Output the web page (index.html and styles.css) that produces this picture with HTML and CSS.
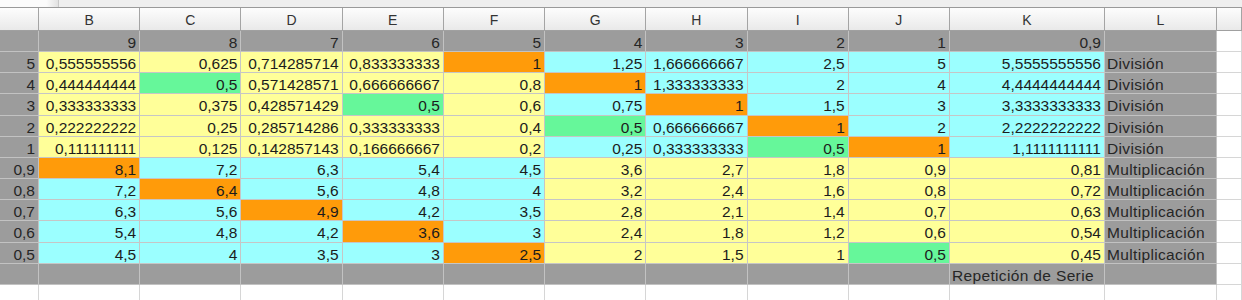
FILE: index.html
```
<!DOCTYPE html>
<html lang="es">
<head>
<meta charset="utf-8">
<title>Tabla</title>
<link rel="stylesheet" href="styles.css">
</head>
<body>
<div class="sheet">
  <div class="strip"><div class="tab"></div></div>

  <div class="hd"></div><div class="hd">B</div><div class="hd">C</div><div class="hd">D</div><div class="hd">E</div><div class="hd">F</div><div class="hd">G</div><div class="hd">H</div><div class="hd">I</div><div class="hd">J</div><div class="hd">K</div><div class="hd">L</div><div class="hd"></div>

  <div class="c k"></div><div class="c k">9</div><div class="c k">8</div><div class="c k">7</div><div class="c k">6</div><div class="c k">5</div><div class="c k">4</div><div class="c k">3</div><div class="c k">2</div><div class="c k">1</div><div class="c k">0,9</div><div class="c k"></div><div class="c w"></div>

  <div class="c k">5</div><div class="c y">0,555555556</div><div class="c y">0,625</div><div class="c y">0,714285714</div><div class="c y">0,833333333</div><div class="c o">1</div><div class="c b">1,25</div><div class="c b">1,666666667</div><div class="c b">2,5</div><div class="c b">5</div><div class="c b">5,5555555556</div><div class="c k t">División</div><div class="c w"></div>

  <div class="c k">4</div><div class="c y">0,444444444</div><div class="c g">0,5</div><div class="c y">0,571428571</div><div class="c y">0,666666667</div><div class="c y">0,8</div><div class="c o">1</div><div class="c b">1,333333333</div><div class="c b">2</div><div class="c b">4</div><div class="c b">4,4444444444</div><div class="c k t">División</div><div class="c w"></div>

  <div class="c k">3</div><div class="c y">0,333333333</div><div class="c y">0,375</div><div class="c y">0,428571429</div><div class="c g">0,5</div><div class="c y">0,6</div><div class="c b">0,75</div><div class="c o">1</div><div class="c b">1,5</div><div class="c b">3</div><div class="c b">3,3333333333</div><div class="c k t">División</div><div class="c w"></div>

  <div class="c k">2</div><div class="c y">0,222222222</div><div class="c y">0,25</div><div class="c y">0,285714286</div><div class="c y">0,333333333</div><div class="c y">0,4</div><div class="c g">0,5</div><div class="c b">0,666666667</div><div class="c o">1</div><div class="c b">2</div><div class="c b">2,2222222222</div><div class="c k t">División</div><div class="c w"></div>

  <div class="c k">1</div><div class="c y">0,111111111</div><div class="c y">0,125</div><div class="c y">0,142857143</div><div class="c y">0,166666667</div><div class="c y">0,2</div><div class="c b">0,25</div><div class="c b">0,333333333</div><div class="c g">0,5</div><div class="c o">1</div><div class="c b">1,1111111111</div><div class="c k t">División</div><div class="c w"></div>

  <div class="c k">0,9</div><div class="c o">8,1</div><div class="c b">7,2</div><div class="c b">6,3</div><div class="c b">5,4</div><div class="c b">4,5</div><div class="c y">3,6</div><div class="c y">2,7</div><div class="c y">1,8</div><div class="c y">0,9</div><div class="c y">0,81</div><div class="c k t">Multiplicación</div><div class="c w"></div>

  <div class="c k">0,8</div><div class="c b">7,2</div><div class="c o">6,4</div><div class="c b">5,6</div><div class="c b">4,8</div><div class="c b">4</div><div class="c y">3,2</div><div class="c y">2,4</div><div class="c y">1,6</div><div class="c y">0,8</div><div class="c y">0,72</div><div class="c k t">Multiplicación</div><div class="c w"></div>

  <div class="c k">0,7</div><div class="c b">6,3</div><div class="c b">5,6</div><div class="c o">4,9</div><div class="c b">4,2</div><div class="c b">3,5</div><div class="c y">2,8</div><div class="c y">2,1</div><div class="c y">1,4</div><div class="c y">0,7</div><div class="c y">0,63</div><div class="c k t">Multiplicación</div><div class="c w"></div>

  <div class="c k">0,6</div><div class="c b">5,4</div><div class="c b">4,8</div><div class="c b">4,2</div><div class="c o">3,6</div><div class="c b">3</div><div class="c y">2,4</div><div class="c y">1,8</div><div class="c y">1,2</div><div class="c y">0,6</div><div class="c y">0,54</div><div class="c k t">Multiplicación</div><div class="c w"></div>

  <div class="c k">0,5</div><div class="c b">4,5</div><div class="c b">4</div><div class="c b">3,5</div><div class="c b">3</div><div class="c o">2,5</div><div class="c y">2</div><div class="c y">1,5</div><div class="c y">1</div><div class="c g">0,5</div><div class="c y">0,45</div><div class="c k t">Multiplicación</div><div class="c w"></div>

  <div class="c k"></div><div class="c k"></div><div class="c k"></div><div class="c k"></div><div class="c k"></div><div class="c k"></div><div class="c k"></div><div class="c k"></div><div class="c k"></div><div class="c k"></div><div class="c k t">Repetición de Serie</div><div class="c k"></div><div class="c w"></div>

  <div class="c w"></div><div class="c w"></div><div class="c w"></div><div class="c w"></div><div class="c w"></div><div class="c w"></div><div class="c w"></div><div class="c w"></div><div class="c w"></div><div class="c w"></div><div class="c w"></div><div class="c w"></div><div class="c w"></div>
</div>
</body>
</html>
```
FILE: styles.css
```
html, body {
  margin: 0;
  padding: 0;
  background: #ffffff;
}
body {
  width: 1242px;
  height: 300px;
  overflow: hidden;
  font-family: "Liberation Sans", Arial, sans-serif;
}
.sheet {
  display: grid;
  grid-template-columns: 39px repeat(9, 101.22px) 155px 111.7px 1fr;
  grid-template-rows: 8px 23px repeat(12, 21.17px) 30px;
}
.strip {
  grid-column: 1 / -1;
  background: #efefef;
  border-bottom: 1px solid #9a9a9a;
  box-sizing: border-box;
  display: flex;
}
.tab {
  width: 58px;
  background: linear-gradient(to right, #fbfbfb 80%, #e2e2e2);
  border-right: 1px solid #c9c9c9;
}
.hd {
  box-sizing: border-box;
  background: linear-gradient(to bottom, #fdfdfd, #e9e9e9);
  border-right: 1px solid #a4a4a4;
  border-bottom: 1px solid #a0a0a0;
  font-size: 14px;
  line-height: 22px;
  padding-top: 1px;
  text-align: center;
  color: #333333;
}
.c {
  box-sizing: border-box;
  border-right: 1px solid #c6c6c6;
  border-bottom: 1px solid #c6c6c6;
  font-size: 15.5px;
  line-height: 18px;
  padding: 3px 3px 0 2px;
  text-align: right;
  white-space: nowrap;
  color: #1c1c1c;
}
.t {
  text-align: left;
  letter-spacing: 0.35px;
}
.k { background: #9c9c9c; border-color: #c2c2c2; color: #262626; }
.y { background: #ffff99; }
.b { background: #9bffff; }
.g { background: #66f79a; }
.o { background: #ff9b0a; }
.w { background: #ffffff; border-color: #d6d6d6; }
```
